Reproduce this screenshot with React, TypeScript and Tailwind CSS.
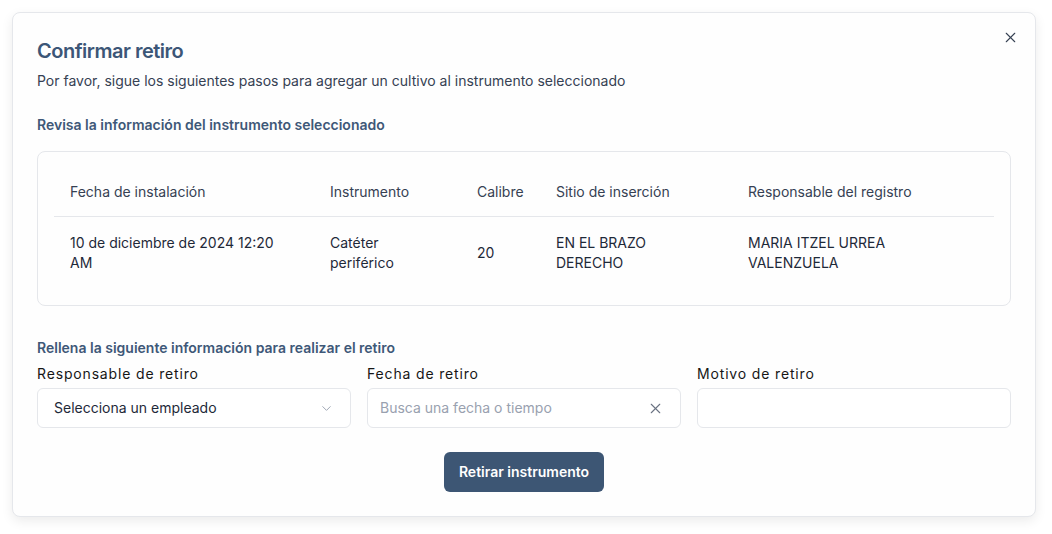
import { ChevronDown, X } from "lucide-react";

const columns = [
  { label: "Fecha de instalación", w: "w-[260px]" },
  { label: "Instrumento", w: "w-[147px]" },
  { label: "Calibre", w: "w-[79px]" },
  { label: "Sitio de inserción", w: "w-[192px]" },
  { label: "Responsable del registro", w: "" },
];

const row = [
  "10 de diciembre de 2024 12:20 AM",
  "Catéter periférico",
  "20",
  "EN EL BRAZO DERECHO",
  "MARIA ITZEL URREA VALENZUELA",
];

export default function App() {
  return (
    <div
      className="min-h-screen w-full bg-white px-3 pt-3 text-gray-800"
      style={{ fontFamily: "Inter, 'Noto Sans', sans-serif" }}
    >
      <div className="relative w-[1024px] rounded-lg border border-gray-200 bg-[#fefefe] px-6 pt-6 pb-6 shadow-[0_4px_12px_rgba(0,0,0,0.08)]">
        <button className="absolute right-[16px] top-[16px] text-gray-700">
          <X size={17} strokeWidth={1.5} />
        </button>

        <h2 className="text-xl leading-7 font-semibold tracking-tight text-[#3c5677]">Confirmar retiro</h2>
        <p className="mt-1.5 text-sm leading-5 text-gray-700">
          Por favor, sigue los siguientes pasos para agregar un cultivo al instrumento seleccionado
        </p>

        <h3 className="mt-6 text-sm leading-5 font-semibold text-[#3e5878]">
          Revisa la información del instrumento seleccionado
        </h3>

        <div className="mt-4 rounded-lg border border-gray-200 p-4">
          <table className="w-full table-fixed text-left text-sm leading-5 text-gray-800">
            <thead>
              <tr className="border-b border-gray-200">
                {columns.map((c) => (
                  <th key={c.label} className={`${c.w} px-4 py-3.5 font-normal text-gray-700`}>
                    {c.label}
                  </th>
                ))}
              </tr>
            </thead>
            <tbody>
              <tr>
                {row.map((v, i) => (
                  <td key={i} className="px-4 py-4 align-middle">
                    {v}
                  </td>
                ))}
              </tr>
            </tbody>
          </table>
        </div>

        <h3 className="mt-8 text-sm leading-5 font-semibold text-[#3e5878]">
          Rellena la siguiente información para realizar el retiro
        </h3>

        <div className="mt-1.5 grid grid-cols-3 gap-4">
          <div className="flex flex-col gap-1">
            <label className="text-sm leading-5 font-normal tracking-[0.06em] text-[#161616]">Responsable de retiro</label>
            <div className="flex h-10 items-center justify-between rounded-md border border-gray-200 bg-white pl-4 pr-4">
              <span className="text-sm text-gray-800">Selecciona un empleado</span>
              <ChevronDown size={15} strokeWidth={1.5} className="text-gray-400" />
            </div>
          </div>
          <div className="flex flex-col gap-1">
            <label className="text-sm leading-5 font-normal tracking-[0.06em] text-[#161616]">Fecha de retiro</label>
            <div className="flex h-10 items-center justify-between rounded-md border border-gray-200 bg-white pl-3 pr-4">
              <span className="text-sm text-gray-400">Busca una fecha o tiempo</span>
              <X size={17} strokeWidth={1.5} className="text-gray-500" />
            </div>
          </div>
          <div className="flex flex-col gap-1">
            <label className="text-sm leading-5 font-normal tracking-[0.06em] text-[#161616]">Motivo de retiro</label>
            <div className="h-10 rounded-md border border-gray-200 bg-white" />
          </div>
        </div>

        <div className="mt-6 flex justify-center">
          <button className="h-10 w-40 rounded-md bg-[#3d5674] text-sm font-semibold text-white">
            Retirar instrumento
          </button>
        </div>
      </div>
    </div>
  );
}
